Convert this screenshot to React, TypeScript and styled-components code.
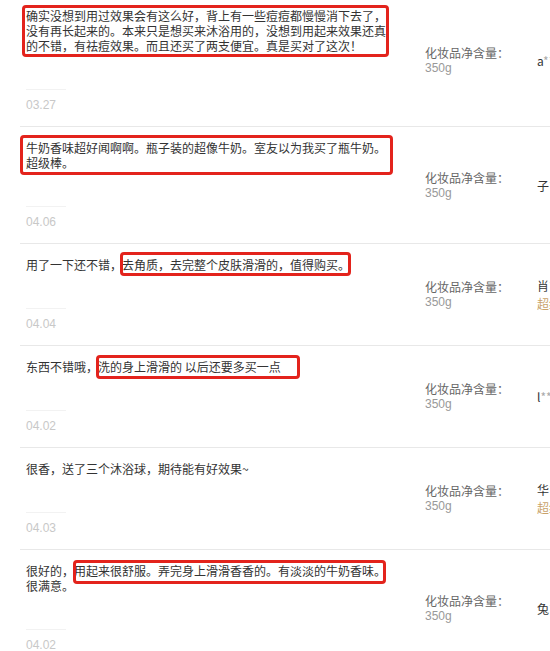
import React from "react";
import styled, { createGlobalStyle } from "styled-components";

const GlobalStyle = createGlobalStyle`
  html, body {
    margin: 0;
    padding: 0;
    background: #ffffff;
  }
  body {
    font-family: "Noto Sans CJK SC", "Noto Sans", "Liberation Sans", sans-serif;
    font-size: 12px;
    color: #333;
    overflow: hidden;
  }
`;

const Page = styled.div`
  width: 550px;
  height: 651px;
  overflow: hidden;
  background: #fff;
`;

const List = styled.div`
  margin-top: -5px;
  margin-left: 20px;
  width: 560px;
`;

const Row = styled.div<{ $first?: boolean }>`
  display: grid;
  grid-template-columns: 405px 112px 1fr;
  border-top: ${(p) => (p.$first ? "none" : "1px solid #e8e8e8")};
`;

const CommentCell = styled.div`
  position: relative;
  padding: 13px 0 13px 6px;
  display: flex;
  flex-direction: column;
`;

const CommentText = styled.div`
  width: 366px;
  font-size: 12px;
  line-height: 15px;
  color: #333;
  word-break: break-all;
`;

const Faint = styled.div`
  margin-top: 36px;
  width: 40px;
  height: 1px;
  background: #f2f2f2;
`;

const DateText = styled.div`
  margin-top: 8px;
  font-family: "Liberation Sans", Arial, sans-serif;
  font-size: 12px;
  line-height: 15px;
  color: #c8c8c8;
`;

const Mark = styled.div<{ $l: number; $t: number; $w: number; $h: number }>`
  position: absolute;
  left: ${(p) => p.$l}px;
  top: ${(p) => p.$t}px;
  width: ${(p) => p.$w}px;
  height: ${(p) => p.$h}px;
  box-sizing: border-box;
  border: 3px solid #e3231c;
  border-radius: 4px;
  pointer-events: none;
`;

const SkuCell = styled.div`
  align-self: center;
  display: flex;
  flex-direction: column;
  gap: 1px;
  font-size: 12px;
  line-height: 15px;
`;

const SkuLabel = styled.span`
  color: #666;
`;

const SkuValue = styled.span`
  color: #999;
  font-family: "Liberation Sans", Arial, sans-serif;
`;

const UserCell = styled.div`
  align-self: center;
  display: flex;
  flex-direction: column;
  gap: 3px;
  font-size: 12px;
  line-height: 15px;
  white-space: nowrap;
`;

const UserName = styled.span`
  color: #333;
`;

const Stars = styled.span`
  color: #aaa;
`;

const Vip = styled.span`
  color: #c9a36b;
`;

type MarkBox = { l: number; t: number; w: number; h: number };
type Review = {
  text: string;
  date: string;
  name: string;
  stars: string;
  vip?: boolean;
  mark?: MarkBox;
};

const reviews: Review[] = [
  {
    text:
      "确实没想到用过效果会有这么好，背上有一些痘痘都慢慢消下去了，没有再长起来的。本来只是想买来沐浴用的，没想到用起来效果还真的不错，有祛痘效果。而且还买了两支便宜。真是买对了这次！",
    date: "03.27",
    name: "a",
    stars: "***",
    mark: { l: 2, t: 10, w: 367, h: 52 },
  },
  {
    text: "牛奶香味超好闻啊啊。瓶子装的超像牛奶。室友以为我买了瓶牛奶。超级棒。",
    date: "04.06",
    name: "子",
    stars: "*",
    mark: { l: 0, t: 8, w: 373, h: 40 },
  },
  {
    text: "用了一下还不错，去角质，去完整个皮肤滑滑的，值得购买。",
    date: "04.04",
    name: "肖",
    stars: "*",
    vip: true,
    mark: { l: 100, t: 8, w: 231, h: 24 },
  },
  {
    text: "东西不错哦，洗的身上滑滑的 以后还要多买一点",
    date: "04.02",
    name: "l",
    stars: "***",
    mark: { l: 76, t: 9, w: 204, h: 24 },
  },
  {
    text: "很香，送了三个沐浴球，期待能有好效果~",
    date: "04.03",
    name: "华",
    stars: "*",
    vip: true,
  },
  {
    text: "很好的，用起来很舒服。弄完身上滑滑香香的。有淡淡的牛奶香味。很满意。",
    date: "04.02",
    name: "兔",
    stars: "*",
    mark: { l: 53, t: 10, w: 313, h: 24 },
  },
];

export default function App() {
  return (
    <Page>
      <GlobalStyle />
      <List>
        {reviews.map((r, i) => (
          <Row key={i} $first={i === 0}>
            <CommentCell>
              <CommentText>{r.text}</CommentText>
              <Faint />
              <DateText>{r.date}</DateText>
              {r.mark && (
                <Mark $l={r.mark.l} $t={r.mark.t} $w={r.mark.w} $h={r.mark.h} />
              )}
            </CommentCell>
            <SkuCell>
              <SkuLabel>化妆品净含量：</SkuLabel>
              <SkuValue>350g</SkuValue>
            </SkuCell>
            <UserCell>
              <span>
                <UserName>{r.name}</UserName>
                <Stars>{r.stars}</Stars>
              </span>
              {r.vip && <Vip>超级会员</Vip>}
            </UserCell>
          </Row>
        ))}
      </List>
    </Page>
  );
}
